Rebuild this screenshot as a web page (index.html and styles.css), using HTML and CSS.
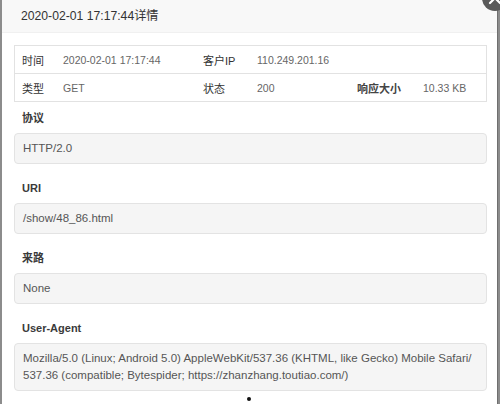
FILE: index.html
```html
<!DOCTYPE html>
<html lang="zh">
<head>
<meta charset="utf-8">
<title>详情</title>
<link rel="stylesheet" href="styles.css">
</head>
<body>
<div class="modal">
  <div class="modal-header">2020-02-01 17:17:44详情</div>
  <span class="close" aria-label="关闭"><svg width="26" height="26" viewBox="0 0 26 26"><circle cx="13" cy="13" r="13" fill="#5a5a5a"/><path d="M8 8 L18 18 M18 8 L8 18" stroke="#fff" stroke-width="2.2" stroke-linecap="round"/></svg></span>
  <div class="modal-body">
    <div class="info-table">
      <div class="row">
        <div class="cell label">时间</div>
        <div class="cell value">2020-02-01 17:17:44</div>
        <div class="cell label">客户IP</div>
        <div class="cell value span3">110.249.201.16</div>
      </div>
      <div class="row">
        <div class="cell label">类型</div>
        <div class="cell value">GET</div>
        <div class="cell label">状态</div>
        <div class="cell value">200</div>
        <div class="cell label strong">响应大小</div>
        <div class="cell value">10.33 KB</div>
      </div>
    </div>
    <div class="field">
      <div class="field-label">协议</div>
      <div class="field-box">HTTP/2.0</div>
    </div>
    <div class="field">
      <div class="field-label">URI</div>
      <div class="field-box">/show/48_86.html</div>
    </div>
    <div class="field">
      <div class="field-label">来路</div>
      <div class="field-box">None</div>
    </div>
    <div class="field">
      <div class="field-label">User-Agent</div>
      <div class="field-box">Mozilla/5.0 (Linux; Android 5.0) AppleWebKit/537.36 (KHTML, like Gecko) Mobile Safari/ 537.36 (compatible; Bytespider; https://zhanzhang.toutiao.com/)</div>
    </div>
    <div class="dot"></div>
  </div>
</div>
</body>
</html>
```
FILE: styles.css
```css
html, body {
  margin: 0;
  padding: 0;
  height: 100%;
}
body {
  background: #8c8c8c;
  font-family: "Liberation Sans", "Noto Sans CJK SC", sans-serif;
  overflow: hidden;
}
.modal {
  position: relative;
  margin-left: 2px;
  width: 495px;
  height: 404px;
  background: #fff;
  border-right: 1px solid #6f6f6f;
}
.modal-header {
  height: 33px;
  line-height: 33px;
  padding-left: 19px;
  background: #f8f8f8;
  border-bottom: 1px solid #f0f0f0;
  box-sizing: border-box;
  font-size: 12.2px;
  color: #333;
}
.close {
  position: absolute;
  right: -11px;
  top: -15px;
  width: 26px;
  height: 26px;
}
.close svg { display: block; }
.modal-body {
  padding: 12px 10px 0 12px;
}
.info-table {
  border: 1px solid #e2e2e2;
  font-size: 11px;
}
.row {
  display: grid;
  grid-template-columns: 41px 140px 54px 100px 66px 1fr;
  height: 27px;
  align-items: center;
}
.row + .row {
  border-top: 1px solid #e2e2e2;
}
.cell {
  padding-left: 7px;
  white-space: nowrap;
}
.label { color: #333; }
.label.strong { font-weight: bold; color: #444; }
.value { color: #666; font-size: 10.5px; }
.span3 { grid-column: span 3; }
.field {
  margin-top: 7px;
}
.field + .field {
  margin-top: 15px;
}
.field-label {
  font-size: 11px;
  line-height: 18px;
  font-weight: bold;
  color: #3a3a3a;
  padding-left: 8px;
  margin-bottom: 6px;
}
.field-box {
  background: #f5f5f5;
  border: 1px solid #e3e3e3;
  border-radius: 4px;
  padding: 6px 8px 6px 8px;
  font-size: 11.5px;
  line-height: 17px;
  color: #555;
}
.dot {
  width: 4px;
  height: 4px;
  border-radius: 50%;
  background: #111;
  margin: 6px auto 0 233px;
}
```
